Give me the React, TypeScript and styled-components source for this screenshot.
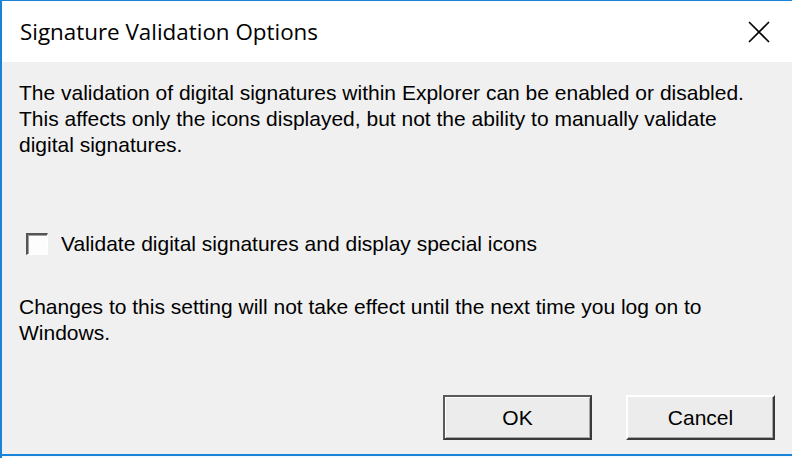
import React, { useState } from 'react';
import styled, { createGlobalStyle } from 'styled-components';

const GlobalStyle = createGlobalStyle`
  html, body {
    margin: 0;
    padding: 0;
    background: #ffffff;
  }
`;

const Window = styled.div`
  width: 792px;
  height: 458px;
  box-sizing: border-box;
  display: flex;
  flex-direction: column;
  border-left: 2px solid #1883d7;
  border-top: 1px solid #1883d7;
  background: #f0f0f0;
`;

const TitleBar = styled.div`
  height: 61px;
  flex: none;
  background: #ffffff;
  display: flex;
  align-items: center;
  justify-content: space-between;
  padding: 0 18px;
`;

const Title = styled.div`
  font-family: 'Open Sans', 'Noto Sans', sans-serif;
  font-size: 22.4px;
  color: #000;
`;

const CloseButton = styled.button`
  width: 30px;
  height: 30px;
  border: none;
  background: transparent;
  padding: 0;
  display: flex;
  align-items: center;
  justify-content: center;
`;

const Body = styled.div`
  flex: 1;
  display: flex;
  flex-direction: column;
  padding: 18px 17px 0 17px;
  font-family: 'Liberation Sans', Arial, sans-serif;
  font-size: 21px;
  color: #000;
`;

const Paragraph = styled.p<{ $top?: number }>`
  margin: ${p => p.$top ?? 0}px 0 0 0;
  line-height: 26px;
`;

const CheckRow = styled.label`
  display: flex;
  align-items: center;
  gap: 13px;
  margin: 73px 0 0 7px;
  line-height: 26px;
`;

const Box = styled.span`
  width: 22px;
  height: 22px;
  box-sizing: border-box;
  background: #fdfdfd;
  border-top: 2px solid #555;
  border-left: 2px solid #555;
  border-right: 1px solid #fff;
  border-bottom: 1px solid #fff;
  box-shadow: inset 1px 1px 0 #a0a0a0;
`;

const Footer = styled.div`
  margin-top: auto;
  display: flex;
  justify-content: flex-end;
  gap: 34px;
  padding: 0 0 14px 0;
`;

const DialogButton = styled.button<{ $default?: boolean }>`
  width: 149px;
  height: 45px;
  box-sizing: border-box;
  font-family: 'Liberation Sans', Arial, sans-serif;
  font-size: 21px;
  color: #000;
  background: #ececec;
  border-top: 2px solid ${p => (p.$default ? '#5a5a5a' : '#ffffff')};
  border-left: 2px solid ${p => (p.$default ? '#5a5a5a' : '#ffffff')};
  border-right: 2px solid #3a3a3a;
  border-bottom: 2px solid #3a3a3a;
  box-shadow: ${p =>
    p.$default
      ? 'inset 1px 1px 0 #ffffff, inset -1px -1px 0 #a8a8a8'
      : 'inset -1px -1px 0 #a8a8a8'};
  padding: 0;
`;

const BottomEdge = styled.div`
  height: 2px;
  background: #1883d7;
  flex: none;
`;

const BottomGap = styled.div`
  height: 2px;
  background: #f6fbff;
  flex: none;
`;

export default function App() {
  const [checked, setChecked] = useState(false);
  return (
    <>
      <GlobalStyle />
      <Window>
        <TitleBar>
          <Title>Signature Validation Options</Title>
          <CloseButton aria-label="Close">
            <svg width="22" height="22" viewBox="0 0 22 22">
              <path d="M1 1 L21 21 M21 1 L1 21" stroke="#000" strokeWidth="1.6" />
            </svg>
          </CloseButton>
        </TitleBar>
        <Body>
          <Paragraph>
            The validation of digital signatures within Explorer can be enabled or disabled.
            <br />
            This affects only the icons displayed, but not the ability to manually validate
            <br />
            digital signatures.
          </Paragraph>
          <CheckRow onClick={() => setChecked(!checked)}>
            <Box>{checked ? '✓' : null}</Box>
            Validate digital signatures and display special icons
          </CheckRow>
          <Paragraph $top={37}>
            Changes to this setting will not take effect until the next time you log on to
            <br />
            Windows.
          </Paragraph>
          <Footer>
            <DialogButton $default>OK</DialogButton>
            <DialogButton>Cancel</DialogButton>
          </Footer>
        </Body>
        <BottomEdge />
        <BottomGap />
      </Window>
    </>
  );
}
